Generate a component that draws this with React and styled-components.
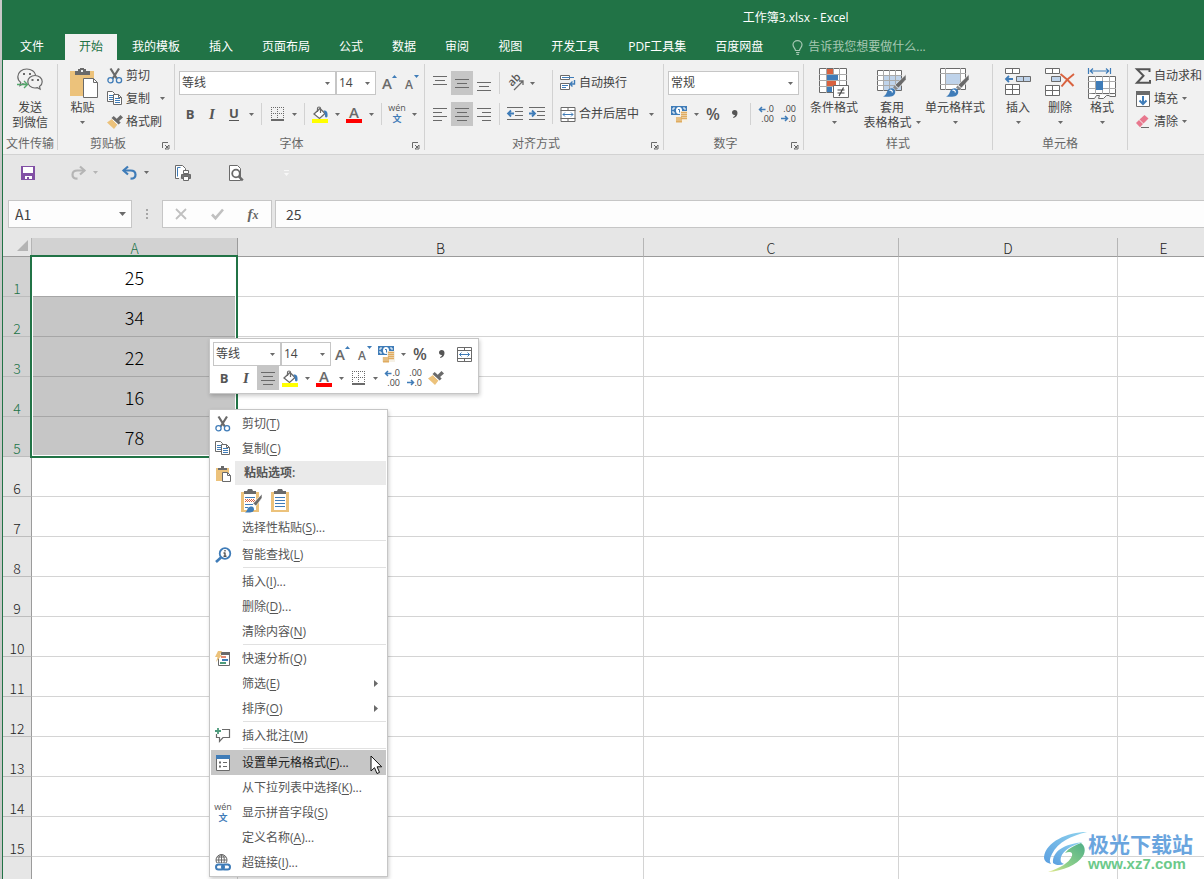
import styled, { createGlobalStyle, css } from "styled-components";

const GREEN = "#217346";
const GRAY = "#6a6a6a";
const BLUE = "#3f7cb8";
const TAN = "#ecc27b";
const UI_FONT = `"Open Sans", "Noto Sans CJK SC", sans-serif`;
const CELL_FONT = `"Noto Sans CJK SC", sans-serif`;

const GlobalStyle = createGlobalStyle`
  *,
  *::before,
  *::after {
    box-sizing: border-box;
  }

  body {
    margin: 0;
    background: #c8c8c8;
    color: #444;
    font: 12px/16px ${UI_FONT};
    overflow: hidden;
  }

  button,
  input,
  select {
    margin: 0;
    padding: 0;
    border: 0;
    border-radius: 0;
    background: none;
    color: inherit;
    font: inherit;
  }

  svg {
    display: block;
    flex: none;
    overflow: visible;
  }
`;

/* ---------- icons ---------- */

const Icon = ({ w, h, children }) => (
  <svg width={w} height={h} viewBox={`0 0 ${w} ${h}`} fill="none" aria-hidden="true">
    {children}
  </svg>
);

const Arrow = ({ color = GRAY }) => (
  <Icon w={5} h={3}>
    <path d="M0 0h5L2.5 3z" fill={color} />
  </Icon>
);

const WechatIcon = () => (
  <Icon w={26} h={23}>
    <path
      d="M10 16.5c-1.5 0-2.500-.2-4-.8L3 17.500l.7-3C1.800 13 .8 11 .8 8.800.8 4.500 4.800 1 9.800 1c4.500 0 8.200 2.700 8.900 6.300"
      stroke={GRAY}
      strokeWidth="1.200"
    />
    <path
      d="M18 7.500c4 0 7.200 2.800 7.200 6.200 0 2-1 3.700-2.700 4.800l.6 2.700-2.700-1.500c-.8.200-1.600.3-2.400.3-4 0-7.200-2.800-7.200-6.300 0-3.400 3.200-6.200 7.200-6.200z"
      stroke={GRAY}
      strokeWidth="1.200"
    />
    <path d="M6 5h2v2H6zM12 5h2v2h-2zM14.500 11h2v2h-2zM20 11h2v2h-2z" fill={GRAY} />
    <path d="M0 16.500h10M7 13l3.500 3.500L7 20" stroke="#54a86c" strokeWidth="1.400" />
  </Icon>
);

const PasteIcon = () => (
  <Icon w={31} h={30}>
    <g transform="translate(3 0)">
      <path d="M0 3h24v25H0z" fill={TAN} />
      <path d="M5 3h3V1h2V0h4v1h2v2h4v4H5z" fill={GRAY} />
      <path d="M11 2h2v2h-2z" fill="#f1f1f1" />
      <path d="M13.500 10.500h10l4 4v15h-14z" fill="#fff" stroke={GRAY} />
      <path d="M23.500 10.500v4h4" stroke={GRAY} />
    </g>
  </Icon>
);

const SmallPasteIcon = () => (
  <Icon w={16} h={16}>
    <path d="M1 2h13v13H1z" fill={TAN} />
    <path d="M3 2h3V0h3v2h3v2H3z" fill={GRAY} />
    <path d="M7.500 6.500h5l3 3v6h-8z" fill="#fff" stroke={GRAY} />
    <path d="M12.500 6.500v3h3" stroke={GRAY} />
  </Icon>
);

const CutIcon = () => (
  <Icon w={16} h={16}>
    <path d="M3.500.5l6.300 10M12 .5l-6.300 10" stroke={GRAY} strokeWidth="2.200" />
    <circle cx="3.500" cy="12.300" r="2.600" stroke={BLUE} strokeWidth="1.300" />
    <circle cx="12" cy="12.300" r="2.600" stroke={BLUE} strokeWidth="1.300" />
  </Icon>
);

const CopyIcon = () => (
  <Icon w={16} h={15}>
    <path d="M.5.5h5l2 2v8h-7z" fill="#fff" stroke={GRAY} />
    <path d="M2 4.500h4M2 6.500h4M2 8.500h4" stroke={BLUE} />
    <path d="M6.500 3.500h5l3 3v7h-8z" fill="#fff" stroke={GRAY} />
    <path d="M8 7.500h5M8 9.500h5M8 11.500h5" stroke={BLUE} />
    <path d="M11.500 3.500v3h3" stroke={GRAY} />
  </Icon>
);

const PainterIcon = () => (
  <Icon w={16} h={14}>
    <path d="M0 7.500l5-3.500 5.500 5.500L7 14z" fill={TAN} />
    <path d="M4.500 3l2.200-2 7 6.500-2 2z" fill={GRAY} />
    <path d="M9 4.500L13.500 0 16 2.500l-4.500 4z" fill={GRAY} />
    <path d="M5.500 4.500l5 5" stroke="#fff" strokeWidth=".8" />
  </Icon>
);

const GrowFontIcon = ({ shrink }) => (
  <Icon w={16} h={18}>
    <text
      x={shrink ? 2 : 1}
      y="15"
      fill={GRAY}
      fontSize={shrink ? 12 : 15}
      fontWeight="600"
      fontFamily="Open Sans"
    >
      A
    </text>
    <path d={shrink ? "M11 1h5l-2.500 3z" : "M11 4h5l-2.500-3z"} fill={BLUE} />
  </Icon>
);

const BordersIcon = () => (
  <Icon w={13} h={14}>
    <path
      d="M0 .5h13M0 6.500h13M.5 0v13M6.500 0v13M12.500 0v13"
      stroke={GRAY}
      strokeDasharray="1 1"
    />
    <path d="M0 13h13" stroke={GRAY} strokeWidth="2" />
  </Icon>
);

const FillIcon = () => (
  <Icon w={16} h={17}>
    <path d="M8 2.500l5 5-5.500 5-5.500-4.500z" fill="#fff" stroke={GRAY} strokeWidth="1.300" />
    <path d="M5.500 6V2.500c0-2 3-2 3 0V7" stroke={GRAY} strokeWidth="1.200" />
    <path d="M11.500 4.500c3-.5 4.500 1.500 4 6-.8 1.200-2 1.200-2.500 0 .2-2-.3-4-1.500-6z" fill={BLUE} />
    <path d="M0 13h16v4H0z" fill="#ff0" />
  </Icon>
);

const FontColorIcon = () => (
  <Icon w={16} h={17}>
    <text x="8" y="12" textAnchor="middle" fill={GRAY} fontSize="15" fontWeight="600" fontFamily="Open Sans">
      A
    </text>
    <path d="M0 13h16v4H0z" fill="#f00" />
  </Icon>
);

const PhoneticIcon = () => (
  <Icon w={18} h={18}>
    <text x="9" y="6" textAnchor="middle" fill="#555" fontSize="9" fontFamily="Open Sans">
      wén
    </text>
    <text x="9" y="17" textAnchor="middle" fill={BLUE} fontSize="9" fontWeight="700" fontFamily="Noto Sans CJK SC">
      文
    </text>
  </Icon>
);

const lineSets = {
  top: "M0 .5h14M2 4.500h10M0 8.500h14",
  middle: "M0 3.500h14M2 7.500h10M0 11.500h14",
  bottom: "M0 6.500h14M2 10.500h10M0 14.500h14",
  left: "M0 1.500h14M0 5.500h9M0 9.500h14M0 13.500h9",
  center: "M0 1.500h14M2 5.500h10M0 9.500h14M2 13.500h10",
  right: "M0 1.500h14M5 5.500h9M0 9.500h14M5 13.500h9",
};

const LinesIcon = ({ kind }) => (
  <Icon w={14} h={15}>
    <path d={lineSets[kind]} stroke={GRAY} />
  </Icon>
);

const OrientationIcon = () => (
  <Icon w={17} h={16}>
    <text
      fill="#555"
      fontSize="11"
      fontWeight="600"
      fontFamily="Open Sans"
      transform="translate(5 12) rotate(-45)"
    >
      ab
    </text>
    <path d="M7 15l8.500-8.500M12 6h4v4" stroke={GRAY} strokeWidth="1.300" />
  </Icon>
);

const IndentIcon = ({ out }) => (
  <Icon w={16} h={14}>
    <path d="M0 .5h16M8 4.500h8M8 8.500h8M0 12.500h16" stroke={GRAY} />
    <path
      d={out ? "M7 6.500H1.500M4 3.500l-3 3 3 3" : "M0 6.500h5.500M3 3.500l3 3-3 3"}
      stroke={BLUE}
      strokeWidth="1.800"
    />
  </Icon>
);

const WrapIcon = () => (
  <Icon w={16} h={16}>
    <path d="M.5.5h9v4h-9zM.5 8.500h9v6h-9z" fill="#fff" stroke={GRAY} />
    <path d="M2 2.500h12M2 10.500h6M2 12.500h4" stroke={BLUE} />
    <path d="M14.500 5v4H10M12.500 6.500L10 9l2.500 2.500" stroke={BLUE} strokeWidth="1.400" />
  </Icon>
);

const MergeIcon = () => (
  <Icon w={15} h={15}>
    <path d="M.5.5h14v14H.5z" fill="#fff" stroke={GRAY} />
    <path d="M0 3.500h15M0 11.500h15M7.500 0v4M7.500 11v4" stroke={GRAY} />
    <path d="M2.500 7.500h10M4.500 5.500l-2 2 2 2M10.500 5.500l2 2-2 2" stroke={BLUE} />
  </Icon>
);

const CurrencyIcon = () => (
  <Icon w={17} h={16}>
    <path d="M0 0h16v9H0z" fill={BLUE} />
    <path d="M2 4V2h2M12 2h2v2M2 5v2h2" stroke="#fff" />
    <ellipse cx="8" cy="4.500" rx="3" ry="3.500" fill="#fff" />
    <path d="M7 3.500h1.500V6.500" stroke={BLUE} />
    <path d="M9 5h8v11H4v-5h5z" fill="#f6f1e6" />
    <path d="M10 6.500h6M10 8.500h6M10 10.500h6M10 12.500h6" stroke="#e0ac60" strokeWidth="1.400" />
    <path d="M5 12h6M5 14h6M5 15.700h6" stroke="#e0ac60" strokeWidth="1.400" />
  </Icon>
);

const CommaIcon = () => (
  <Icon w={6} h={8}>
    <path
      d="M0 2.500C0 1 1 0 2.700 0 4.500 0 5.500 1.200 5.500 3c0 2.500-1.500 4.500-4 5L1 7c1.200-.4 1.800-1 2-2C1.200 5.300 0 4 0 2.500z"
      fill="#555"
    />
  </Icon>
);

const DecimalIcon = ({ less }) => (
  <Icon w={17} h={16}>
    <text x="16" y="6" textAnchor="end" fill="#444" fontSize="9" fontFamily="Open Sans">
      {less ? ".00" : ".0"}
    </text>
    <text x="16" y="16" textAnchor="end" fill="#444" fontSize="9" fontFamily="Open Sans">
      {less ? ".0" : ".00"}
    </text>
    <path
      d={less ? "M1 12.500h6M5 10l2.500 2.500L5 15" : "M1.500 3.500h6M4 1L1.500 3.500 4 6"}
      stroke={BLUE}
      strokeWidth="1.500"
    />
  </Icon>
);

const ConditionalIcon = () => (
  <Icon w={30} h={30}>
    <path d="M.5.5h27v24H.5z" fill="#fff" stroke={GRAY} />
    <path d="M0 6.500h28M0 12.500h28M0 18.500h28M7.500 0v25M14.500 0v25M20.500 0v25" stroke="#aaa" />
    <path d="M8 1h6v5H8zM8 13h9v5H8z" fill="#d9623f" />
    <path d="M8 7h11v5H8zM8 19h5v5H8z" fill={BLUE} />
    <path d="M14.500 17.500h15v12h-15z" fill="#fff" stroke={GRAY} />
    <path d="M18.500 22h7M18.500 25h7M24.500 19.500L20 28" stroke="#444" strokeWidth="1.200" />
  </Icon>
);

const BrushOver = () => (
  <>
    <path d="M29 6.500v5L21.500 20l-3.500-3z" fill={GRAY} stroke="#f1f1f1" strokeWidth=".6" />
    <path d="M17.500 17.500l3.500 3-2 1.500-3-2.500z" fill="#888" />
    <path
      d="M6 28.500c3-1 3.500-3.500 4.500-6 1.500-2.500 5-3 6.500-1.500 2 2 1.500 5-.5 6.500-3 1.800-7.500 1.300-10.500 1z"
      fill={BLUE}
    />
    <path d="M12.500 22.500c1.500-.8 3 0 2.800 2" stroke="#fff" strokeWidth="1.200" />
  </>
);

const TableStyleIcon = () => (
  <Icon w={30} h={30}>
    <path d="M.5 2.500h24v20H.5z" fill="#fff" stroke={GRAY} />
    <path d="M7 8h17v14H7z" fill="#bfd3ea" />
    <path d="M0 7.500h25M0 12.500h25M0 17.500h25M6.500 2v21M12.500 2v21M18.500 2v21" stroke="#aaa" />
    <BrushOver />
  </Icon>
);

const CellStyleIcon = () => (
  <Icon w={30} h={30}>
    <path d="M.5.5h25v21H.5z" fill="#fff" stroke={GRAY} />
    <path d="M0 5.500h26M0 16.500h26M5.500 0v22M20.500 0v22" stroke="#aaa" />
    <path d="M6 6h14v10H6z" fill="#bfd3ea" />
    <BrushOver />
  </Icon>
);

const InsertCellsIcon = () => (
  <Icon w={28} h={30}>
    <path
      d="M1.500.5h14v5h-14zM1.500 16.500h14v10h-14zM1.500 21.500h14M8.500.5v5M8.500 16.500v10"
      fill="#fff"
      stroke={GRAY}
    />
    <path d="M12.500 8.500h14v5h-14zM19.500 8.500v5" fill="#bfd3ea" stroke={GRAY} />
    <path d="M2 11h7M5 8l-3 3 3 3" stroke={BLUE} strokeWidth="1.800" />
  </Icon>
);

const DeleteCellsIcon = () => (
  <Icon w={30} h={30}>
    <path
      d="M.5.5h14v5H.5zM.5 17.500h14v10H.5zM.5 22.500h14M7.500.5v5M7.500 17.500v10"
      fill="#fff"
      stroke={GRAY}
    />
    <path d="M6.500 8.500h9v5h-9z" fill="#bfd3ea" stroke={GRAY} />
    <path d="M15.500 6c4 3 9 7.500 13 12M29 6c-5 3.500-9 7.500-12.500 12.500" stroke="#d9623f" strokeWidth="2" />
  </Icon>
);

const FormatCellsIcon = () => (
  <Icon w={28} h={32}>
    <path
      d="M.5 0v6M22.500 0v6M2 3h19M5 .5L2.300 3 5 5.500M18 .5L20.700 3 18 5.500"
      stroke={BLUE}
      strokeWidth="1.200"
    />
    <path d="M.5 8.500h27v17H.5z" fill="#fff" stroke={GRAY} />
    <path d="M0 13.500h28M0 20.500h28M7.500 8v18M14.500 8v18M21.500 8v18" stroke="#aaa" />
    <path d="M8 13h7v9H8z" fill={BLUE} />
    <path d="M.5 25.500v5h6l2-3h3l-1 3h5l3-3h3M27.500 25.500v3h-6" fill="#fff" stroke={GRAY} />
  </Icon>
);

const SumIcon = () => (
  <Icon w={16} h={16}>
    <path d="M14.500 4V1.200H2l6.500 6.600L2 14.700h13V12" stroke="#555" strokeWidth="2" />
  </Icon>
);

const FillDownIcon = () => (
  <Icon w={16} h={16}>
    <path d="M1.500.5h13v15h-13z" fill="#fff" stroke={GRAY} />
    <path d="M1 0h14v4H1z" fill={GRAY} />
    <path d="M8 5v8M4.500 9.500L8 13l3.500-3.500" stroke={BLUE} strokeWidth="2" />
  </Icon>
);

const EraserIcon = () => (
  <Icon w={16} h={14}>
    <path d="M9.500 0l4 3.500-5 5-4-4z" fill="#e8788e" />
    <path d="M4 5l4 4-3 3.200L1 8z" fill="#e8788e" />
    <path d="M6 12.500h8" stroke={GRAY} />
  </Icon>
);

const LauncherIcon = () => (
  <Icon w={8} h={8}>
    <path d="M.5 6V.5H6" stroke={GRAY} />
    <path d="M3 3l3 3M7 3v4H3z" stroke={GRAY} />
  </Icon>
);

const BulbIcon = () => (
  <Icon w={11} h={15}>
    <path
      d="M3.500 10.500C3.500 8.500 1 7.500 1 4.800 1 2.500 3 .7 5.500.7S10 2.500 10 4.800c0 2.700-2.500 3.700-2.500 5.700zM4 12.500h3.500M4.500 14.300h2.500"
      stroke="#a6c8b3"
      strokeWidth="1.200"
    />
  </Icon>
);

const SaveIcon = () => (
  <Icon w={14} h={14}>
    <path d="M0 0h14v14H0z" fill="#8250a5" />
    <path d="M2 1h10v6H2zM4 10h7v3H4z" fill="#fff" />
    <path d="M6 11h2v2H6z" fill="#8250a5" />
  </Icon>
);

const UndoIcon = ({ flip, color }) => (
  <Icon w={15} h={14}>
    <g transform={flip ? "translate(15 0) scale(-1 1)" : undefined}>
      <path d="M1.500 4.500h7c3 0 5 1.700 5 4.200s-2 4-5 4" stroke={color} strokeWidth="2.200" />
      <path d="M6 .5L1.500 4.500 6 8.500" stroke={color} strokeWidth="2.200" />
    </g>
  </Icon>
);

const QuickPrintIcon = () => (
  <Icon w={17} h={16}>
    <path d="M4 13.500H.5V.5h7l3 3V5" fill="#fff" stroke={GRAY} />
    <path d="M2.500 11.500v-9h3" stroke={BLUE} />
    <path d="M8.500 5.500h5v3h-5z" fill="#fff" stroke={GRAY} />
    <path d="M6.500 9.500h9v4h-9z" fill="#777" stroke={GRAY} />
    <path d="M8.500 11.500h5v4h-5z" fill="#fff" stroke={GRAY} />
  </Icon>
);

const PreviewIcon = () => (
  <Icon w={15} h={16}>
    <path d="M.5.5h8l3 3v12H.5z" fill="#fff" stroke={GRAY} />
    <circle cx="7" cy="8.500" r="3.800" fill="#fff" stroke={GRAY} strokeWidth="1.800" />
    <path d="M9.800 11.300l4 4" stroke={GRAY} strokeWidth="2.400" />
  </Icon>
);

const CancelIcon = () => (
  <Icon w={12} h={12}>
    <path d="M1 1l10 10M11 1L1 11" stroke="#c0c0c0" strokeWidth="1.800" />
  </Icon>
);

const EnterIcon = () => (
  <Icon w={13} h={12}>
    <path d="M1 6.500l3.500 3.700L12 1.500" stroke="#c0c0c0" strokeWidth="2.600" />
  </Icon>
);

const PasteSourceIcon = () => (
  <Icon w={22} h={24}>
    <path d="M0 3h18v20H0z" fill={TAN} />
    <path d="M3 4h12v17H3z" fill="#fff" />
    <path d="M3 5V2h3l1-2h4l1 2h3v3z" fill={GRAY} />
    <path d="M4 8.500h10M4 15.500h8M4 18.500h3" stroke={BLUE} />
    <path d="M4 10.500h10M5 11.500h9M4 12.500h10" stroke="#d9623f" strokeDasharray="1 1" />
    <path d="M21 5v4l-6 8-3-2.500z" fill={GRAY} stroke="#fff" strokeWidth=".6" />
    <path d="M4 23.500c2-1 2-3 3-4.500 1.500-2 4.500-2 5.500-.5 1 2 .5 4-1.500 4.500-2 .8-5 .6-7 .5z" fill={BLUE} />
  </Icon>
);

const PasteValuesIcon = () => (
  <Icon w={18} h={24}>
    <path d="M0 3h18v20H0z" fill={TAN} />
    <path d="M3 4h12v17H3z" fill="#fff" />
    <path d="M3 5V2h3l1-2h4l1 2h3v3z" fill={GRAY} />
    <path d="M4 8.500h10M4 11.500h10M4 14.500h10M4 17.500h10" stroke={BLUE} />
  </Icon>
);

const LookupIcon = () => (
  <Icon w={17} h={16}>
    <circle cx="10" cy="6.500" r="5.300" fill="#fff" stroke={BLUE} strokeWidth="1.800" />
    <path d="M6 10.500L1 15" stroke={BLUE} strokeWidth="2.600" />
    <path d="M10 3v1.500M10 5.500v4M8.500 9.300h3M8.500 6h1.500" stroke="#555" strokeWidth="1.400" />
  </Icon>
);

const AnalysisIcon = () => (
  <Icon w={16} h={16}>
    <path d="M3.500 1.500h11v13h-11z" fill="#fff" stroke={GRAY} />
    <path d="M6 1h9v3H6z" fill={GRAY} />
    <path d="M6 6h5" stroke="#d9623f" strokeWidth="1.500" />
    <path d="M7 9h6" stroke={BLUE} strokeWidth="2" />
    <path d="M5 12h6" stroke="#4d9b7c" strokeWidth="2" />
    <path d="M3 0h4L5 4h2L1 11l1.500-5H0z" fill={TAN} />
  </Icon>
);

const CommentIcon = () => (
  <Icon w={16} h={15}>
    <path d="M7 1.500h7.500v8H8l-3.500 4v-4h-3V6" stroke={GRAY} strokeWidth="1.200" />
    <path d="M0 3h6M3 0v6" stroke="#4d9b7c" strokeWidth="1.800" />
  </Icon>
);

const FormatDialogIcon = () => (
  <Icon w={14} h={16}>
    <path d="M.5.5h13v15H.5z" fill="#fff" stroke={GRAY} />
    <path d="M0 0h14v4H0z" fill={BLUE} />
    <path d="M3 6.500h2v2H3zM3 10.500h2v2H3z" fill={GRAY} />
    <path d="M7 7.500h4M7 11.500h4" stroke={GRAY} />
  </Icon>
);

const LinkIcon = () => (
  <Icon w={16} h={17}>
    <circle cx="6.500" cy="6" r="5.500" stroke={GRAY} />
    <path d="M1 6h11M6.500 0v11M2 3h9M2 9h9" stroke={GRAY} />
    <ellipse cx="6.500" cy="6" rx="2.800" ry="5.500" stroke={GRAY} />
    <path d="M0 9h16v8H0z" fill="#fff" />
    <rect x="1" y="10.500" width="8" height="5" rx="2.500" stroke={BLUE} strokeWidth="2" />
    <rect x="7" y="10.500" width="8" height="5" rx="2.500" stroke={BLUE} strokeWidth="2" />
  </Icon>
);

const PointerIcon = () => (
  <Icon w={13} h={20}>
    <path d="M1 1v15l3.500-3.300L7 18.500l2.500-1.100-2.400-5.600h4.600z" fill="#fff" stroke="#111" />
  </Icon>
);

const SwirlLogo = () => (
  <Icon w={45} h={42}>
    <defs>
      <linearGradient id="swoosh" x1="1" y1="0" x2="0" y2="1">
        <stop offset="0" stopColor="#8fd3ee" />
        <stop offset="1" stopColor="#5b9fe0" />
      </linearGradient>
      <linearGradient id="leaf" x1="1" y1="0" x2="0" y2="1">
        <stop offset="0" stopColor="#4fae86" />
        <stop offset=".6" stopColor="#8ccf8a" />
        <stop offset="1" stopColor="#e3e88a" />
      </linearGradient>
    </defs>
    <path d="M44 1C24 1 3 11 1 26c0 4 3 6 7 7-2-3-1-6 1-10C15 11 28 5 44 1z" fill="url(#swoosh)" />
    <path
      d="M10 32C9 20 22 13 40 11c-10 3-20 8-22 15-1 4 0 6 3 7-4 2-9 1-11-1z"
      fill="url(#swoosh)"
    />
    <path d="M38 12c4 3 5 8 2 13-6 9-20 15-35 16 12-4 21-9 24-16 1-4-2-5-7-3 4-5 10-8 16-10z" fill="url(#leaf)" />
  </Icon>
);

/* ---------- window frame ---------- */

const Frame = styled.div`
  height: 100vh;
  padding-left: 2px;
`;

const Window = styled.div`
  position: relative;
  display: flex;
  flex-direction: column;
  height: 100%;
  border-left: 1px solid ${GREEN};
  background: #e6e6e6;
  overflow: hidden;
`;

const TitleBar = styled.header`
  height: 34px;
  padding-left: 32%;
  background: ${GREEN};
  color: #fff;
  line-height: 35px;
  text-align: center;
`;

const TabBar = styled.nav`
  display: flex;
  gap: 1px;
  height: 26px;
  padding-left: 3px;
  background: ${GREEN};
`;

const Tab = styled.button`
  padding: 0 14px;
  color: ${(p) => (p.$active ? GREEN : "#fff")};
  background: ${(p) => (p.$active ? "#f1f1f1" : "none")};
  line-height: 24px;
  white-space: nowrap;

  &:first-child {
    margin-right: 6px;
  }
`;

const TellMe = styled.label`
  display: flex;
  align-items: center;
  gap: 5px;
  margin-left: 14px;
  color: #a6c8b3;

  input {
    width: 150px;
    line-height: 16px;
    outline: 0;
  }

  input::placeholder {
    color: inherit;
    opacity: 1;
  }
`;

/* ---------- ribbon ---------- */

const Ribbon = styled.section`
  display: flex;
  flex: none;
  height: 95px;
  padding: 4px 0;
  border-bottom: 1px solid #d2d2d2;
  background: #f1f1f1;
  overflow: hidden;
`;

const GroupBox = styled.div`
  display: flex;
  flex: none;
  flex-direction: column;
  width: ${(p) => p.$w}px;
  border-right: 1px solid #d2d2d2;

  &:last-child {
    border-right: 0;
  }
`;

const GroupBody = styled.div`
  display: flex;
  flex: 1;
  padding: 0 0 0 ${(p) => p.$pad}px;
`;

const GroupFooter = styled.div`
  display: flex;
  align-items: center;
  height: 12px;
  color: #666;
`;

const GroupName = styled.span`
  flex: 1;
  text-align: center;
  white-space: nowrap;
`;

const Launcher = styled.button`
  display: grid;
  place-items: end;
  width: 16px;
  height: 12px;
  padding: 0 4px 0 0;
`;

const Group = ({ name, w, pad = 4, launcher, children }) => (
  <GroupBox $w={w}>
    <GroupBody $pad={pad}>{children}</GroupBody>
    <GroupFooter>
      <GroupName>{name}</GroupName>
      {launcher && (
        <Launcher aria-label={launcher}>
          <LauncherIcon />
        </Launcher>
      )}
    </GroupFooter>
  </GroupBox>
);

const BigButton = styled.button`
  display: flex;
  flex: none;
  flex-direction: column;
  align-items: center;
  width: ${(p) => p.$w}px;
  padding-top: 4px;
  line-height: 15px;
  white-space: nowrap;
`;

const BigIcon = styled.span`
  height: 32px;
`;

const BigLine = styled.span`
  display: flex;
  align-items: center;
  justify-content: center;
  gap: 4px;
  min-height: 15px;
`;

const Column = styled.div`
  display: flex;
  flex: none;
  flex-direction: column;
`;

const Rows = styled(Column)`
  gap: 7px;
  padding-top: 7px;
`;

const Row = styled.div`
  display: flex;
  align-items: center;
  height: 24px;
`;

const TextRow = styled(Row)`
  height: 23px;
`;

const ToolButton = styled.button`
  display: flex;
  flex: none;
  align-items: center;
  justify-content: center;
  width: ${(p) => p.$w || 22}px;
  height: 24px;
  margin-left: ${(p) => p.$gap || 0}px;
  ${(p) => p.$active && css`
    background: #c6c6c6;
  `}
`;

const Glyph = styled.span`
  color: #555;
  font-size: ${(p) => p.$size || 13}px;
  font-weight: ${(p) => p.$weight || 700};
  ${(p) => p.$italic && css`
    font-family: "Liberation Serif", serif;
    font-style: italic;
  `}
  ${(p) => p.$underline && css`
    border-bottom: 1px solid #555;
    line-height: 13px;
  `}
`;

const LabelButton = styled.button`
  display: flex;
  align-items: center;
  gap: 3px;
  padding: 0 0 0 3px;
  white-space: nowrap;

  > svg {
    width: 16px;
  }
`;

const Divider = styled.span`
  align-self: ${(p) => (p.$tall ? "flex-start" : "center")};
  flex: none;
  width: 1px;
  height: ${(p) => (p.$tall ? 54 : 22)}px;
  margin: ${(p) => (p.$tall ? "6px 4px 0" : "0 4px")};
  background: #d2d2d2;
`;

const ComboBox = styled.label`
  position: relative;
  display: flex;
  flex: none;
  align-items: center;
  width: ${(p) => p.$w}px;
  height: 24px;
  margin-right: ${(p) => p.$after || 0}px;
  border: 1px solid #c6c6c6;
  background: #fff;

  select {
    flex: 1;
    min-width: 0;
    height: 22px;
    padding: 0 16px 0 2px;
    appearance: none;
  }

  svg {
    position: absolute;
    right: 5px;
    pointer-events: none;
  }
`;

const Combo = ({ label, value, w, after }) => (
  <ComboBox $w={w} $after={after}>
    <select aria-label={label} defaultValue={value}>
      <option>{value}</option>
    </select>
    <Arrow />
  </ComboBox>
);

const CaretButton = ({ label, gap }) => (
  <ToolButton $w={12} $gap={gap} aria-label={label}>
    <Arrow />
  </ToolButton>
);

/* ---------- quick access + formula bar ---------- */

const QuickAccess = styled.div`
  display: flex;
  flex: none;
  align-items: center;
  height: 35px;
  padding-left: 14px;
`;

const FormulaBar = styled.div`
  display: flex;
  flex: none;
  height: 48px;
  padding: 10px 0 10px 5px;
  font-family: ${CELL_FONT};
  font-size: 14px;
`;

const FieldBox = styled.div`
  display: flex;
  align-items: center;
  width: ${(p) => p.$w}px;
  border: 1px solid #c6c6c6;
  background: #fdfdfd;

  input {
    flex: 1;
    min-width: 0;
    padding-left: 6px;
    outline: 0;
    line-height: 20px;
  }
`;

const FormulaField = styled(FieldBox)`
  flex: 1;
  margin-left: 3px;
  border-right: 0;

  input {
    padding-left: 10px;
  }
`;

const Grip = styled.span`
  align-self: center;
  width: 30px;

  svg {
    margin: 0 auto;
  }
`;

const Fx = styled.i`
  color: #666;
  font: italic 700 15px "Liberation Serif", serif;

  small {
    font-size: 12px;
  }
`;

/* ---------- sheet ---------- */

const SheetArea = styled.main`
  flex: 1;
  min-height: 0;
  overflow: hidden;
`;

const Grid = styled.table`
  width: ${(p) => p.$w}px;
  table-layout: fixed;
  border-spacing: 0;
  background: #fff;
  font-family: ${CELL_FONT};
`;

const headState = css`
  background: ${(p) => (p.$selected ? "#d2d2d2" : "#e6e6e6")};
  color: ${(p) => (p.$selected ? GREEN : "#222")};
  font-size: 14px;
  font-weight: 300;
`;

const ColHead = styled.th`
  ${headState}
  height: 19px;
  padding: 2px 0 0;
  border-right: 1px solid ${(p) => (p.$selected ? "#9b9b9b" : "#b5b5b5")};
  border-bottom: 1px solid #9b9b9b;
  line-height: 16px;
`;

const Corner = styled(ColHead)`
  padding: 0 3px 3px 0;

  &::after {
    content: "";
    display: block;
    margin-left: auto;
    width: 0;
    border-bottom: 11px solid #b4b4b4;
    border-left: 11px solid transparent;
  }
`;

const RowHead = styled.th`
  ${headState}
  height: 40px;
  padding: 0;
  border-right: 1px solid #9b9b9b;
  border-bottom: 1px solid #bdbdbd;
  line-height: 16px;
  vertical-align: bottom;
`;

const Cell = styled.td`
  position: relative;
  height: 40px;
  padding: 0;
  border-right: 1px solid #d4d4d4;
  border-bottom: 1px solid ${(p) => (p.$filled ? "#a6a6a6" : "#d4d4d4")};
  background: ${(p) => (p.$shaded ? "#c6c6c6" : "#fff")};
  color: #000;
  font-size: 18px;
  font-weight: 300;
  line-height: 24px;
  text-align: center;
`;

const SelectionFrame = styled.div`
  position: absolute;
  z-index: 1;
  top: -2px;
  left: -2px;
  width: calc(100% + 3px);
  height: ${(p) => p.$rows * 40 + 3}px;
  border: 2px solid ${GREEN};
  box-shadow: inset 0 0 0 1px #fff;
  pointer-events: none;
`;

/* ---------- floating parts ---------- */

const popup = css`
  position: absolute;
  z-index: 2;
  border: 1px solid #c6c6c6;
  background: #fff;
  box-shadow: 1px 2px 4px rgba(0, 0, 0, 0.2);
`;

const MiniToolbar = styled.div`
  ${popup}
  top: 338px;
  left: 206px;
  width: 270px;
  padding: 3px;
`;

const Menu = styled.ul`
  ${popup}
  top: 409px;
  left: 206px;
  width: 179px;
  margin: 0;
  padding: 1px;
  list-style: none;
`;

const MenuButton = styled.button`
  display: flex;
  align-items: center;
  width: 100%;
  height: 25px;
  background: ${(p) => (p.$hover ? "#c6c6c6" : "none")};
  color: ${(p) => (p.$hover ? "#222" : "#555")};
  white-space: nowrap;
  text-align: left;

  u {
    text-underline-offset: 2px;
  }

  > svg:last-child {
    margin-left: auto;
    margin-right: 8px;
  }
`;

const MenuIcon = styled.span`
  display: grid;
  flex: none;
  place-items: center;
  width: 24px;
  margin-right: ${(p) => p.$after ?? 7}px;
`;

const MenuHeading = styled.div`
  display: flex;
  height: 25px;
  color: #555;

  > strong {
    flex: 1;
    height: 24px;
    padding-left: 9px;
    background: #eaeaea;
    font-weight: 600;
    line-height: 24px;
  }
`;

const PasteOptions = styled.div`
  display: flex;
  align-items: center;
  gap: 8px;
  height: 29px;
  padding-left: 30px;
`;

const MenuLine = styled.li`
  height: 2px;
  margin-left: 32px;
  border-top: 1px solid #e1e1e1;
`;

const Pointer = styled.div`
  position: absolute;
  z-index: 3;
  top: 755px;
  left: 367px;
`;

const Watermark = styled.div`
  position: absolute;
  right: 11px;
  bottom: 6px;
  display: flex;
  align-items: center;
`;

const WatermarkText = styled.div`
  color: #6aa5de;
  font: 700 21px/24px ${CELL_FONT};

  span {
    display: block;
    color: #6cc98a;
    font: 700 15px/18px "Liberation Sans", sans-serif;
  }
`;

/* ---------- data ---------- */

const tabs = [
  "文件",
  "开始",
  "我的模板",
  "插入",
  "页面布局",
  "公式",
  "数据",
  "审阅",
  "视图",
  "开发工具",
  "PDF工具集",
  "百度网盘",
];

const columns = [
  { name: "A", w: 206 },
  { name: "B", w: 406 },
  { name: "C", w: 255 },
  { name: "D", w: 219 },
  { name: "E", w: 92 },
  { name: "", w: 206 },
];

const values = [25, 34, 22, 16, 78];
const rowNumbers = Array.from({ length: 15 }, (_, i) => i + 1);
const gridWidth = columns.reduce((sum, col) => sum + col.w, 29);

const menuTop = [
  { text: "剪切", hotkey: "T", icon: <CutIcon /> },
  { text: "复制", hotkey: "C", icon: <CopyIcon /> },
];

const menuRest = [
  { text: "选择性粘贴", hotkey: "S", dots: true },
  null,
  { text: "智能查找", hotkey: "L", icon: <LookupIcon /> },
  null,
  { text: "插入", hotkey: "I", dots: true },
  { text: "删除", hotkey: "D", dots: true },
  { text: "清除内容", hotkey: "N" },
  null,
  { text: "快速分析", hotkey: "Q", icon: <AnalysisIcon /> },
  { text: "筛选", hotkey: "E", submenu: true },
  { text: "排序", hotkey: "O", submenu: true },
  null,
  { text: "插入批注", hotkey: "M", icon: <CommentIcon /> },
  null,
  { text: "设置单元格格式", hotkey: "F", dots: true, icon: <FormatDialogIcon />, hover: true },
  { text: "从下拉列表中选择", hotkey: "K", dots: true },
  { text: "显示拼音字段", hotkey: "S", icon: <PhoneticIcon /> },
  { text: "定义名称", hotkey: "A", dots: true },
  { text: "超链接", hotkey: "I", dots: true, icon: <LinkIcon /> },
];

/* ---------- sections ---------- */

const BigTool = ({ icon, w, lines, inlineCaret, noCaret }) => (
  <BigButton $w={w}>
    <BigIcon>{icon}</BigIcon>
    {lines.map((line, i) => (
      <BigLine key={line}>
        {line}
        {inlineCaret && i === lines.length - 1 && <Arrow />}
      </BigLine>
    ))}
    {!inlineCaret && !noCaret && (
      <BigLine>
        <Arrow />
      </BigLine>
    )}
  </BigButton>
);

const ClipboardGroup = () => (
  <Group name="剪贴板" w={117} pad={3} launcher="剪贴板设置">
    <BigTool w={43} icon={<PasteIcon />} lines={["粘贴"]} />
    <Column>
      <TextRow>
        <LabelButton>
          <CutIcon />
          剪切
        </LabelButton>
      </TextRow>
      <TextRow>
        <LabelButton>
          <CopyIcon />
          复制
        </LabelButton>
        <CaretButton label="复制选项" gap={6} />
      </TextRow>
      <TextRow>
        <LabelButton>
          <PainterIcon />
          格式刷
        </LabelButton>
      </TextRow>
    </Column>
  </Group>
);

const FontGroup = () => (
  <Group name="字体" w={250} launcher="字体设置">
    <Rows>
      <Row>
        <Combo label="字体" value="等线" w={157} />
        <Combo label="字号" value="14" w={40} after={2} />
        <ToolButton aria-label="增大字号">
          <GrowFontIcon />
        </ToolButton>
        <ToolButton aria-label="减小字号">
          <GrowFontIcon shrink />
        </ToolButton>
      </Row>
      <Row>
        <ToolButton>
          <Glyph>B</Glyph>
        </ToolButton>
        <ToolButton>
          <Glyph $italic $size={15}>I</Glyph>
        </ToolButton>
        <ToolButton>
          <Glyph $underline>U</Glyph>
        </ToolButton>
        <CaretButton label="下划线选项" />
        <Divider />
        <ToolButton aria-label="边框">
          <BordersIcon />
        </ToolButton>
        <CaretButton label="边框选项" />
        <Divider />
        <ToolButton aria-label="填充颜色">
          <FillIcon />
        </ToolButton>
        <CaretButton label="填充颜色选项" />
        <ToolButton aria-label="字体颜色">
          <FontColorIcon />
        </ToolButton>
        <CaretButton label="字体颜色选项" />
        <Divider />
        <ToolButton aria-label="拼音">
          <PhoneticIcon />
        </ToolButton>
        <CaretButton label="拼音选项" />
      </Row>
    </Rows>
  </Group>
);

const AlignGroup = () => (
  <Group name="对齐方式" w={239} launcher="对齐设置">
    <Rows>
      <Row>
        <ToolButton aria-label="顶端对齐">
          <LinesIcon kind="top" />
        </ToolButton>
        <ToolButton $active aria-label="垂直居中">
          <LinesIcon kind="middle" />
        </ToolButton>
        <ToolButton aria-label="底端对齐">
          <LinesIcon kind="bottom" />
        </ToolButton>
        <Divider />
        <ToolButton aria-label="方向">
          <OrientationIcon />
        </ToolButton>
        <CaretButton label="方向选项" />
      </Row>
      <Row>
        <ToolButton aria-label="左对齐">
          <LinesIcon kind="left" />
        </ToolButton>
        <ToolButton $active aria-label="居中">
          <LinesIcon kind="center" />
        </ToolButton>
        <ToolButton aria-label="右对齐">
          <LinesIcon kind="right" />
        </ToolButton>
        <Divider />
        <ToolButton aria-label="减少缩进量">
          <IndentIcon out />
        </ToolButton>
        <ToolButton aria-label="增加缩进量">
          <IndentIcon />
        </ToolButton>
      </Row>
    </Rows>
    <Divider $tall />
    <Rows>
      <Row>
        <LabelButton>
          <WrapIcon />
          自动换行
        </LabelButton>
      </Row>
      <Row>
        <LabelButton>
          <MergeIcon />
          合并后居中
        </LabelButton>
        <CaretButton label="合并选项" gap={6} />
      </Row>
    </Rows>
  </Group>
);

const NumberGroup = () => (
  <Group name="数字" w={140} launcher="数字设置">
    <Rows>
      <Row>
        <Combo label="数字格式" value="常规" w={131} />
      </Row>
      <Row>
        <ToolButton aria-label="会计数字格式">
          <CurrencyIcon />
        </ToolButton>
        <CaretButton label="货币选项" />
        <ToolButton>
          <Glyph $size={16} $weight={600}>%</Glyph>
        </ToolButton>
        <ToolButton aria-label="千位分隔样式">
          <CommaIcon />
        </ToolButton>
        <Divider />
        <ToolButton aria-label="增加小数位数">
          <DecimalIcon />
        </ToolButton>
        <ToolButton aria-label="减少小数位数">
          <DecimalIcon less />
        </ToolButton>
      </Row>
    </Rows>
  </Group>
);

const StyleGroup = () => (
  <Group name="样式" w={189} pad={2}>
    <BigTool w={56} icon={<ConditionalIcon />} lines={["条件格式"]} />
    <BigTool w={60} icon={<TableStyleIcon />} lines={["套用", "表格格式"]} inlineCaret />
    <BigTool w={66} icon={<CellStyleIcon />} lines={["单元格样式"]} />
  </Group>
);

const CellsGroup = () => (
  <Group name="单元格" w={135}>
    <BigTool w={42} icon={<InsertCellsIcon />} lines={["插入"]} />
    <BigTool w={42} icon={<DeleteCellsIcon />} lines={["删除"]} />
    <BigTool w={42} icon={<FormatCellsIcon />} lines={["格式"]} />
  </Group>
);

const EditGroup = () => (
  <Group name="" w={140}>
    <Column>
      <TextRow>
        <LabelButton>
          <SumIcon />
          自动求和
        </LabelButton>
      </TextRow>
      <TextRow>
        <LabelButton>
          <FillDownIcon />
          填充
        </LabelButton>
        <CaretButton label="填充选项" />
      </TextRow>
      <TextRow>
        <LabelButton>
          <EraserIcon />
          清除
        </LabelButton>
        <CaretButton label="清除选项" />
      </TextRow>
    </Column>
  </Group>
);

const Sheet = () => (
  <SheetArea>
    <Grid $w={gridWidth}>
      <colgroup>
        <col width={29} />
        {columns.map((col, i) => (
          <col key={i} width={col.w} />
        ))}
      </colgroup>
      <thead>
        <tr>
          <Corner aria-label="全选" />
          {columns.map((col, i) => (
            <ColHead key={i} $selected={i === 0}>
              {col.name}
            </ColHead>
          ))}
        </tr>
      </thead>
      <tbody>
        {rowNumbers.map((n, r) => (
          <tr key={n}>
            <RowHead $selected={r < values.length}>{n}</RowHead>
            {columns.map((col, c) => {
              const filled = c === 0 && r < values.length;
              return (
                <Cell key={c} $filled={filled} $shaded={filled && r > 0}>
                  {filled && values[r]}
                  {filled && r === 0 && <SelectionFrame $rows={values.length} />}
                </Cell>
              );
            })}
          </tr>
        ))}
        <tr>
          <RowHead aria-label="16" />
          {columns.map((col, c) => (
            <Cell key={c} />
          ))}
        </tr>
      </tbody>
    </Grid>
  </SheetArea>
);

const FloatingToolbar = () => (
  <MiniToolbar role="toolbar">
    <Row>
      <Combo label="浮动字体" value="等线" w={68} />
      <Combo label="浮动字号" value="14" w={50} />
      <ToolButton aria-label="增大字号">
        <GrowFontIcon />
      </ToolButton>
      <ToolButton aria-label="减小字号">
        <GrowFontIcon shrink />
      </ToolButton>
      <ToolButton aria-label="会计数字格式">
        <CurrencyIcon />
      </ToolButton>
      <CaretButton label="货币选项" />
      <ToolButton>
        <Glyph $size={16} $weight={600}>%</Glyph>
      </ToolButton>
      <ToolButton aria-label="千位分隔样式">
        <CommaIcon />
      </ToolButton>
      <ToolButton aria-label="合并后居中">
        <MergeIcon />
      </ToolButton>
    </Row>
    <Row>
      <ToolButton>
        <Glyph>B</Glyph>
      </ToolButton>
      <ToolButton>
        <Glyph $italic $size={15}>I</Glyph>
      </ToolButton>
      <ToolButton $active aria-label="居中">
        <LinesIcon kind="center" />
      </ToolButton>
      <ToolButton aria-label="填充颜色">
        <FillIcon />
      </ToolButton>
      <CaretButton label="填充颜色选项" />
      <ToolButton aria-label="字体颜色">
        <FontColorIcon />
      </ToolButton>
      <CaretButton label="字体颜色选项" />
      <ToolButton aria-label="边框">
        <BordersIcon />
      </ToolButton>
      <CaretButton label="边框选项" />
      <ToolButton aria-label="增加小数位数">
        <DecimalIcon />
      </ToolButton>
      <ToolButton aria-label="减少小数位数">
        <DecimalIcon less />
      </ToolButton>
      <ToolButton aria-label="格式刷">
        <PainterIcon />
      </ToolButton>
    </Row>
  </MiniToolbar>
);

const MenuItem = ({ item }) => (
  <li>
    <MenuButton $hover={item.hover}>
      <MenuIcon>{item.icon}</MenuIcon>
      <span>
        {item.text}(<u>{item.hotkey}</u>){item.dots && "..."}
      </span>
      {item.submenu && (
        <Icon w={4} h={7}>
          <path d="M0 0v7l4-3.500z" fill={GRAY} />
        </Icon>
      )}
    </MenuButton>
  </li>
);

const ContextMenu = () => (
  <Menu>
    {menuTop.map((item) => (
      <MenuItem key={item.text} item={item} />
    ))}
    <li>
      <MenuHeading>
        <MenuIcon $after={0}>
          <SmallPasteIcon />
        </MenuIcon>
        <strong>粘贴选项:</strong>
      </MenuHeading>
      <PasteOptions>
        <button aria-label="保留源格式">
          <PasteSourceIcon />
        </button>
        <button aria-label="粘贴值">
          <PasteValuesIcon />
        </button>
      </PasteOptions>
    </li>
    {menuRest.map((item, i) =>
      item ? <MenuItem key={i} item={item} /> : <MenuLine key={i} role="separator" />
    )}
  </Menu>
);

const App = () => (
  <Frame>
    <GlobalStyle />
    <Window>
      <TitleBar>工作簿3.xlsx - Excel</TitleBar>
      <TabBar>
        {tabs.map((tab) => (
          <Tab key={tab} $active={tab === "开始"}>
            {tab}
          </Tab>
        ))}
        <TellMe>
          <BulbIcon />
          <input aria-label="操作说明搜索" placeholder="告诉我您想要做什么..." />
        </TellMe>
      </TabBar>
      <Ribbon>
        <Group name="文件传输" w={55} pad={0}>
          <BigTool w={54} icon={<WechatIcon />} lines={["发送", "到微信"]} noCaret />
        </Group>
        <ClipboardGroup />
        <FontGroup />
        <AlignGroup />
        <NumberGroup />
        <StyleGroup />
        <CellsGroup />
        <EditGroup />
      </Ribbon>
      <QuickAccess>
        <ToolButton aria-label="保存">
          <SaveIcon />
        </ToolButton>
        <ToolButton $gap={28} aria-label="恢复">
          <UndoIcon flip color="#b5b5b5" />
        </ToolButton>
        <ToolButton $w={12} aria-label="恢复选项">
          <Arrow color="#b5b5b5" />
        </ToolButton>
        <ToolButton $gap={17} aria-label="撤消">
          <UndoIcon color={BLUE} />
        </ToolButton>
        <CaretButton label="撤消选项" />
        <ToolButton $gap={20} aria-label="快速打印">
          <QuickPrintIcon />
        </ToolButton>
        <ToolButton $gap={31} aria-label="打印预览">
          <PreviewIcon />
        </ToolButton>
        <ToolButton $w={12} $gap={33} aria-label="自定义快速访问工具栏">
          <Icon w={5} h={6}>
            <path d="M0 0h5v1H0zM0 3h5L2.500 6z" fill="#f8f8f8" />
          </Icon>
        </ToolButton>
      </QuickAccess>
      <FormulaBar>
        <FieldBox $w={124}>
          <input aria-label="名称框" defaultValue="A1" />
          <ToolButton $w={18} aria-label="名称列表">
            <Icon w={7} h={4}>
              <path d="M0 0h7L3.500 4z" fill={GRAY} />
            </Icon>
          </ToolButton>
        </FieldBox>
        <Grip>
          <Icon w={2} h={10}>
            <path d="M0 0h2v2H0zM0 4h2v2H0zM0 8h2v2H0z" fill="#a6a6a6" />
          </Icon>
        </Grip>
        <FieldBox $w={110}>
          <ToolButton $w={36} aria-label="取消">
            <CancelIcon />
          </ToolButton>
          <ToolButton $w={36} aria-label="输入">
            <EnterIcon />
          </ToolButton>
          <ToolButton $w={36} aria-label="插入函数">
            <Fx>
              f<small>x</small>
            </Fx>
          </ToolButton>
        </FieldBox>
        <FormulaField>
          <input aria-label="编辑栏" defaultValue="25" />
        </FormulaField>
      </FormulaBar>
      <Sheet />
      <FloatingToolbar />
      <ContextMenu />
      <Pointer>
        <PointerIcon />
      </Pointer>
      <Watermark>
        <SwirlLogo />
        <WatermarkText>
          极光下载站
          <span>www.xz7.com</span>
        </WatermarkText>
      </Watermark>
    </Window>
  </Frame>
);

export default App;
